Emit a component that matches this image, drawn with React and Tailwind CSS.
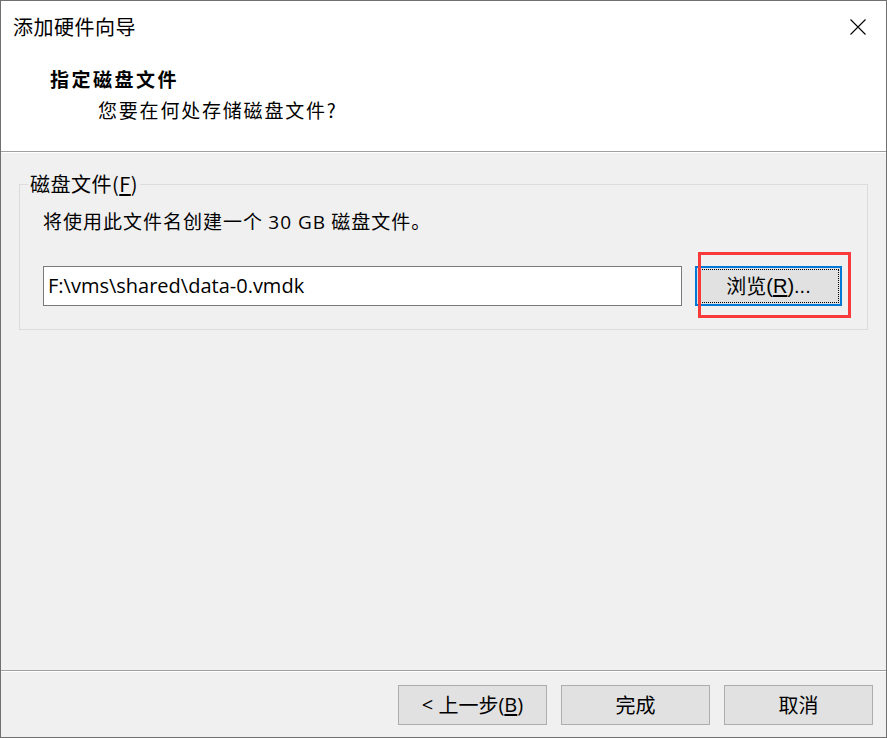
const cjk = "font-['Noto_Sans_CJK_SC',sans-serif]";
const latin = "font-['Open_Sans','Noto_Sans_CJK_SC',sans-serif]";
const narrow = "font-['Liberation_Sans','Noto_Sans_CJK_SC',sans-serif]";

function Btn({ children, className = '' }) {
  return (
    <button
      className={`w-[149px] h-[40px] border border-[#adadad] bg-[#e1e1e1] text-[20px] leading-none text-black flex items-center justify-center ${className}`}
    >
      {children}
    </button>
  );
}

function CloseIcon() {
  return (
    <svg width="16" height="16" viewBox="0 0 16 16" className="mt-[2px]">
      <path d="M0.5 0.5 L15.5 15.5 M15.5 0.5 L0.5 15.5" stroke="#000" strokeWidth="1.1" fill="none" />
    </svg>
  );
}

export default function App() {
  return (
    <div className={`w-[887px] h-[738px] border border-[#707070] bg-[#f0f0f0] flex flex-col ${cjk} text-black`}>
      {/* Header */}
      <div className="h-[151px] bg-white border-b border-[#a0a0a0] shrink-0">
        <div className="flex items-start justify-between pl-[12px] pr-[20px] pt-[16px]">
          <div className="text-[20px] leading-none tracking-[0.5px]">添加硬件向导</div>
          <CloseIcon />
        </div>
        <div className="pl-[49px] pt-[32px] text-[19px] leading-none font-bold tracking-[2.5px]">指定磁盘文件</div>
        <div className="pl-[97px] pt-[12px] text-[19px] leading-none tracking-[1.8px]">
          您要在何处存储磁盘文件?
        </div>
      </div>
      <div className="h-px bg-white shrink-0" />

      {/* Body */}
      <div className="flex-1 pt-[31px] pl-[18px] pr-[18px]">
        <div className="relative border border-[#dcdcdc] pl-[23px] pr-[24px] pt-[26px] pb-[23px]">
          <div className="absolute left-[8px] top-[-11px] bg-[#f0f0f0] px-[2px] text-[20px] leading-none tracking-[0.5px]">
            磁盘文件(<span className="underline underline-offset-2">F</span>)
          </div>
          <div className="text-[19px] leading-none tracking-[1px]">
            将使用此文件名创建一个 <span className={latin}>30 GB</span> 磁盘文件。
          </div>
          <div className="flex items-center gap-[13px] mt-[34px]">
            <div className={`w-[639px] h-[40px] border border-[#7a7a7a] bg-white flex items-center pl-[4px] text-[20px] leading-none ${latin}`}>
              F:\vms\shared\data-0.vmdk
            </div>
            <div className="relative">
              <button className="w-[147px] h-[40px] border-2 border-[#0078d7] bg-[#e1e1e1] p-px">
                <div className="w-full h-full border border-dotted border-black flex items-center justify-center text-[20px] leading-none">
                  浏览<span className={narrow}>(<span className="underline underline-offset-2">R</span>)...</span>
                </div>
              </button>
              <div className="absolute left-[3px] top-[-14px] w-[153px] h-[66px] border-[3px] border-[#f83a3a] pointer-events-none" />
            </div>
          </div>
        </div>
      </div>

      {/* Footer */}
      <div className="h-px bg-[#a0a0a0] shrink-0" />
      <div className="h-px bg-white shrink-0" />
      <div className="flex justify-end gap-[14px] pt-[13px] pb-[12px] pr-[13px] shrink-0">
        <Btn>
          <span className={latin}>&lt;&nbsp;</span>上一步<span className={latin}>(<span className="underline underline-offset-2">B</span>)</span>
        </Btn>
        <Btn>完成</Btn>
        <Btn>取消</Btn>
      </div>
    </div>
  );
}
